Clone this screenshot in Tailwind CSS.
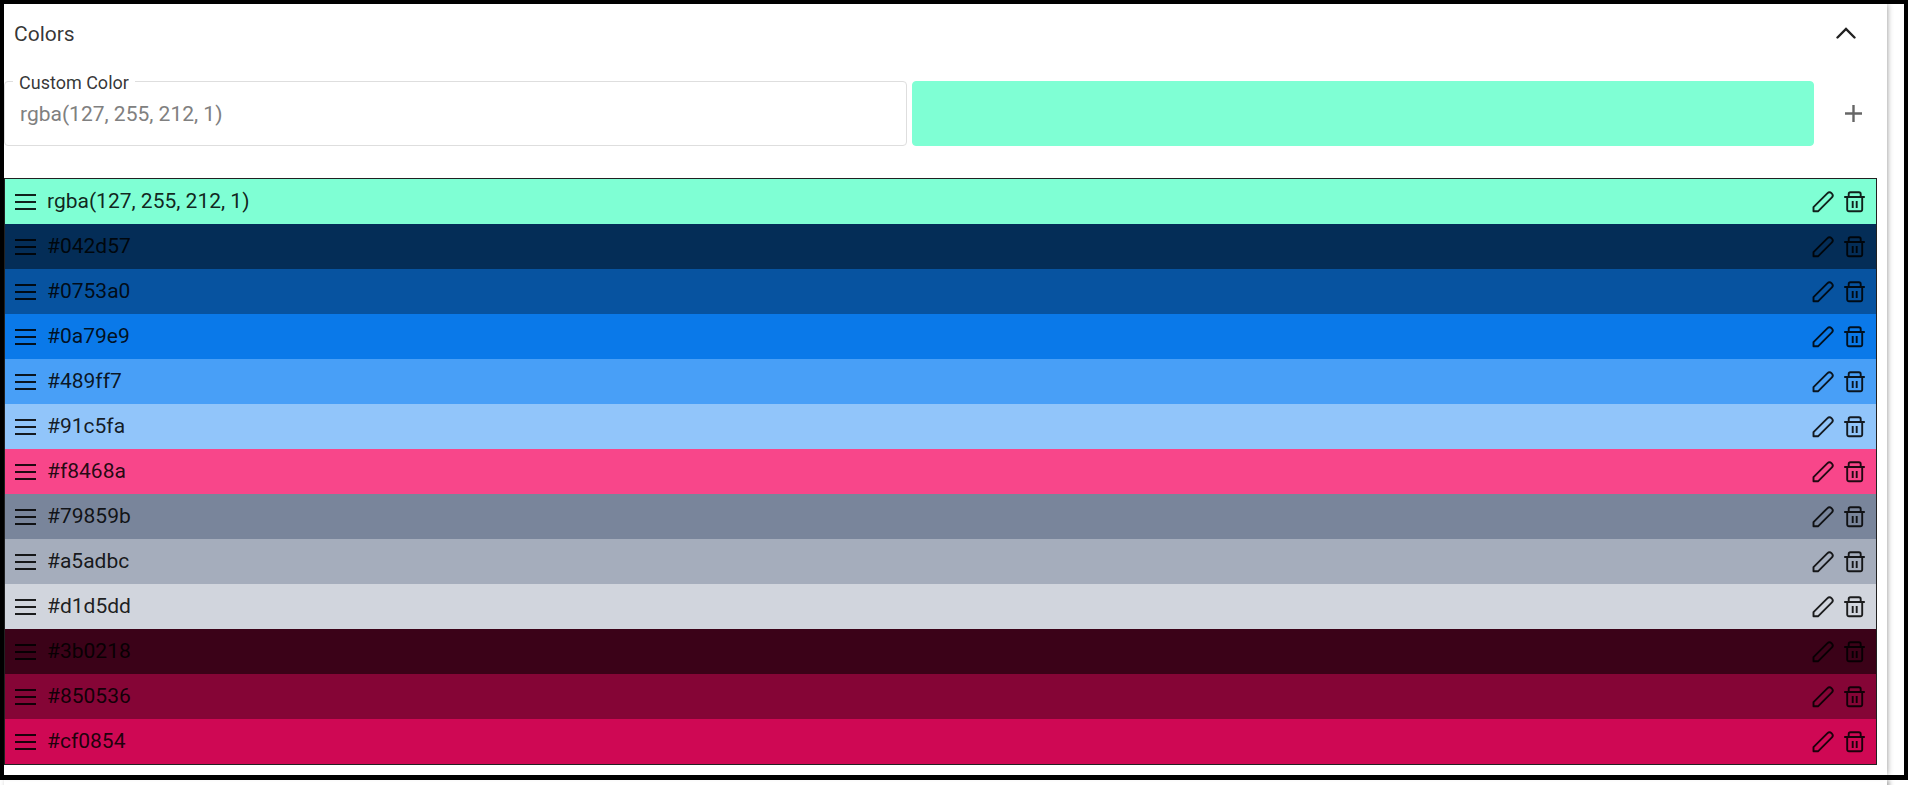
<!DOCTYPE html>
<html lang="en">
<head>
<meta charset="utf-8">
<meta name="viewport" content="width=device-width, initial-scale=1">
<title>Colors</title>
<script src="https://cdn.jsdelivr.net/npm/@tailwindcss/browser@4"></script>
</head>
<body class="bg-white font-[Roboto,sans-serif] text-black/87 overflow-x-hidden">
<svg class="hidden" aria-hidden="true">
  <symbol id="menu" viewBox="0 0 24 24"><path d="M2 5h21M2 12h21M2 19h21" fill="none" stroke="currentColor" stroke-width="2"/></symbol>
  <symbol id="pencil" viewBox="0 0 24 24"><path d="M2.500 21.300V17.200L16.300 3.300a3 3 0 0 1 4.400 4.400L7 21.300Z" fill="none" stroke="currentColor" stroke-width="1.900" stroke-linejoin="round"/></symbol>
  <symbol id="trash" viewBox="0 0 24 24"><path d="M1.200 7h20.600M5.700 6.500V4a1.800 1.800 0 0 1 1.800-1.800h8.400A1.800 1.800 0 0 1 17.700 4v2.500M4.200 7v12.500a1.800 1.800 0 0 0 1.800 1.800h11.400a1.800 1.800 0 0 0 1.800-1.800V7M9.700 11v7M13.700 11v7" fill="none" stroke="currentColor" stroke-width="1.900"/></symbol>
</svg>
<div class="border-4 border-b-[5px] border-black">
  <main class="mr-[17px] pr-2.5 pb-2.5 shadow-[0_0_6px_rgba(0,0,0,0.45)]">
    <header class="flex h-[60px] items-center justify-between pl-2.5 pr-5">
      <h1 class="text-[21px] leading-7 text-black/80">Colors</h1>
      <button type="button" aria-label="Collapse colors" class="py-0.5 pl-0.5 pr-px">
        <svg class="size-5" viewBox="0 0 20 20" fill="none" stroke="currentColor" stroke-width="2.400" stroke-linecap="round"><path d="M1.500 13.500 10 5l8.500 8.500"/></svg>
      </button>
    </header>
    <div class="mt-[17px] flex h-[65px] items-stretch gap-[5px]">
      <div class="relative flex-1 rounded border border-[#dedede]">
        <label for="custom-color" class="absolute -top-[11px] left-2 bg-white px-1.5 text-[18px] leading-6 text-black/80">Custom Color</label>
        <input id="custom-color" type="text" placeholder="rgba(127, 255, 212, 1)" class="h-full w-full bg-transparent px-[15px] text-[21px] outline-none placeholder:text-[#808080]">
      </div>
      <div class="flex-1 rounded border border-[#7fffd4] bg-[#7fffd4]"></div>
      <button type="button" aria-label="Add color" class="ml-[-5px] flex w-[63px] items-center justify-center pl-4 text-black/60">
        <svg class="size-[17px]" viewBox="0 0 17 17" fill="none" stroke="currentColor" stroke-width="2.400"><path d="M8.500 0v17M0 8.500h17"/></svg>
      </button>
    </div>
    <ul id="colors" class="mt-8 border border-black/87"></ul>
  </main>
</div>
<div class="h-[5px] overflow-hidden pl-1"><div class="mr-[21px] h-10 shadow-[2px_0_5px_rgba(0,0,0,0.4)]"></div></div>
<template id="row">
  <li class="flex h-[45px] items-center pl-2 pr-[9px]">
    <svg class="mt-px size-6"><use href="#menu"/></svg>
    <span class="ml-2.5 flex-1 pb-0.5 text-[21px] leading-6"></span>
    <button type="button" class="mr-2 mt-px"><svg class="size-6"><use href="#pencil"/></svg></button>
    <button type="button" class="mt-px"><svg class="size-6"><use href="#trash"/></svg></button>
  </li>
</template>
<script>
  const colors = ['rgba(127, 255, 212, 1)', '#042d57', '#0753a0', '#0a79e9', '#489ff7', '#91c5fa', '#f8468a', '#79859b', '#a5adbc', '#d1d5dd', '#3b0218', '#850536', '#cf0854'];
  const row = document.getElementById('row');
  for (const color of colors) {
    const item = row.content.firstElementChild.cloneNode(true);
    item.style.backgroundColor = color;
    item.querySelector('span').textContent = color;
    const [edit, remove] = item.querySelectorAll('button');
    edit.setAttribute('aria-label', 'Edit ' + color);
    remove.setAttribute('aria-label', 'Delete ' + color);
    document.getElementById('colors').append(item);
  }
</script>
</body>
</html>
